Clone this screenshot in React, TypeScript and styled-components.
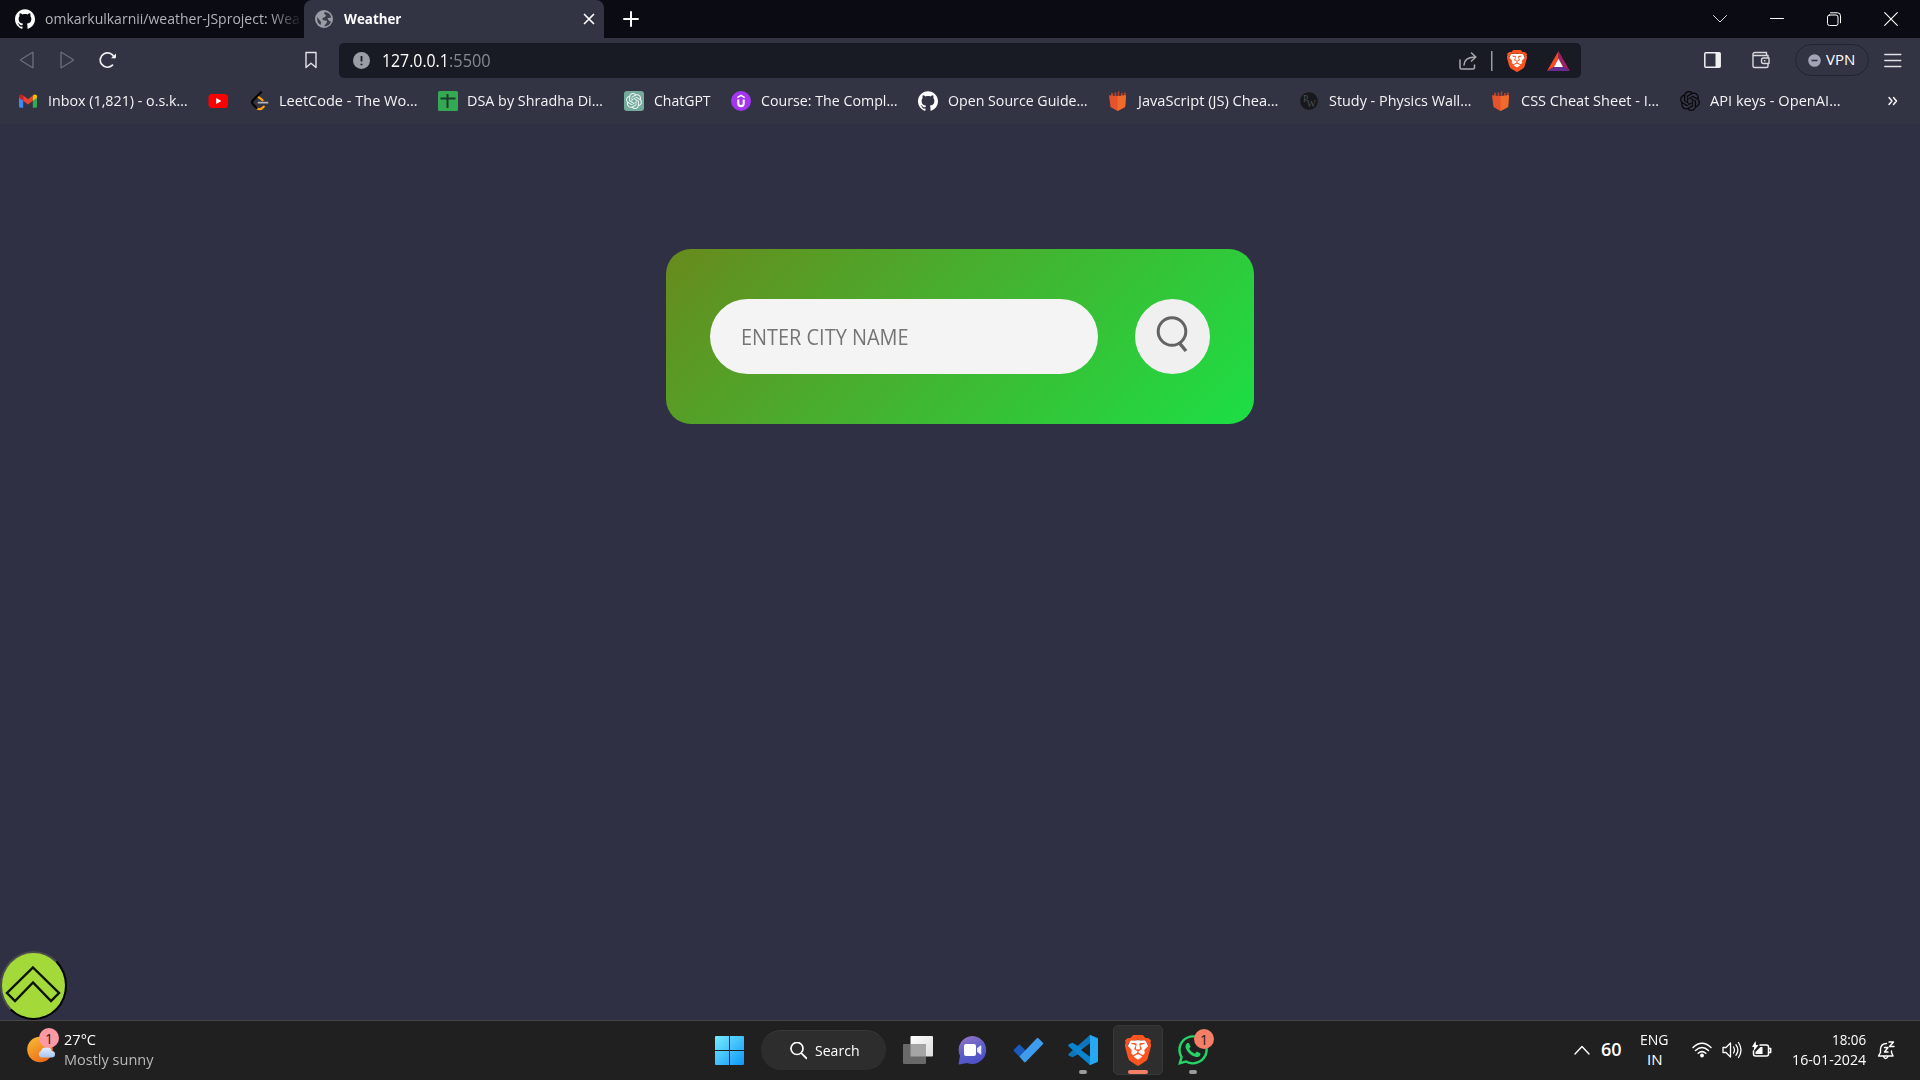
import React, { useLayoutEffect, useRef, useState } from "react";
import styled, { createGlobalStyle } from "styled-components";
import { SiBrave, SiGithub, SiOpenai } from "react-icons/si";
import { FaWhatsapp } from "react-icons/fa";

const GlobalStyle = createGlobalStyle`
  * { box-sizing: border-box; }
  body {
    margin: 0;
    overflow: hidden;
    background: #2f3044;
    font-family: "Open Sans", "Noto Sans", sans-serif;
  }
  svg { display: block; flex: none; }
`;

/* ---------- text set to a known width ---------- */

const Measure = styled.span`
  display: flex;
  flex: none;
  height: 20px;
`;

const Line = styled.span<{ $size: number; $color: string; $weight: number }>`
  flex: none;
  white-space: pre;
  transform-origin: 0 50%;
  font-size: ${(p) => p.$size}px;
  line-height: 18px;
  font-weight: ${(p) => p.$weight};
  color: ${(p) => p.$color};
`;

type LabelProps = { children: string; width: number; size?: number; color?: string; weight?: number };

function Label({ children, width, size = 15, color = "#f3f3f5", weight = 400 }: LabelProps) {
  const ref = useRef<HTMLSpanElement>(null);
  const [scale, setScale] = useState(1);
  useLayoutEffect(() => {
    if (ref.current) setScale(width / ref.current.offsetWidth);
  }, [children, width]);
  return (
    <Measure style={{ width }}>
      <Line ref={ref} $size={size} $color={color} $weight={weight} style={{ transform: `scaleX(${scale})` }}>
        {children}
      </Line>
    </Measure>
  );
}

/* ---------- layout ---------- */

const Screen = styled.div`
  width: 1920px;
  height: 1080px;
  display: flex;
  flex-direction: column;
  overflow: hidden;
`;

const TabStrip = styled.div`
  height: 38px;
  display: flex;
  background: #0b0b14;
`;

const Tab = styled.div<{ $active?: boolean }>`
  width: ${(p) => (p.$active ? 300 : 304)}px;
  display: flex;
  align-items: center;
  padding-left: ${(p) => (p.$active ? 11 : 15)}px;
  gap: ${(p) => (p.$active ? 11 : 10)}px;
  background: ${(p) => (p.$active ? "#323443" : "transparent")};
  border-radius: ${(p) => (p.$active ? "8px 8px 0 0" : "0")};
`;

const FadedTitle = styled.div`
  width: 256px;
  mask-image: linear-gradient(90deg, #000 225px, rgba(0, 0, 0, 0.1) 254px);
`;

const Slot = styled.div<{ $ml?: number; $w: number }>`
  width: ${(p) => p.$w}px;
  margin-left: ${(p) => p.$ml ?? 0}px;
  display: flex;
  align-items: center;
  flex: none;
`;

const WindowButtons = styled.div`
  margin-left: auto;
  padding-right: 22px;
  display: flex;
  align-items: center;
  gap: 43px;
`;

const NavRow = styled.div`
  height: 45px;
  padding-bottom: 1px;
  display: flex;
  align-items: center;
  background: #323443;
`;

const AddressBar = styled.div`
  width: 1242px;
  height: 35px;
  margin: 1px 0 0 22px;
  display: flex;
  align-items: center;
  padding-left: 14px;
  border-radius: 5px;
  background: #181b23;
`;

const Vpn = styled.div`
  width: 74px;
  height: 32px;
  margin-left: 25px;
  display: flex;
  align-items: center;
  gap: 5px;
  padding-left: 12px;
  border: 1px solid #232531;
  border-radius: 16px;
`;

const Bookmarks = styled.div`
  height: 41px;
  padding: 0 0 5px 18px;
  display: flex;
  align-items: center;
  gap: 20.75px;
  background: #323443;
`;

const Bookmark = styled.div`
  display: flex;
  align-items: center;
  gap: 9.5px;
`;

const More = styled.div`
  margin-left: 27px;
`;

const Page = styled.main`
  flex: 1;
  display: flex;
  flex-direction: column;
  justify-content: space-between;
  align-items: center;
  background: #2f3044;
`;

const Card = styled.section`
  width: 588px;
  height: 175px;
  margin-top: 125px;
  padding: 0 44px;
  display: flex;
  align-items: center;
  justify-content: space-between;
  border-radius: 25px;
  background: linear-gradient(135deg, #688a1d, #1cdf45);
`;

const CityField = styled.div`
  width: 388px;
  height: 75px;
  padding: 0 0 0 31px;
  display: flex;
  align-items: center;
  border-radius: 38px;
  background: #f4f4f4;
`;

const SearchButton = styled.button`
  width: 75px;
  height: 75px;
  padding: 0 2px 5px 0;
  display: flex;
  align-items: center;
  justify-content: center;
  border: 0;
  border-radius: 50%;
  background: #f0f0f0;
`;

const ToTop = styled.button`
  width: 67px;
  height: 69px;
  align-self: flex-start;
  padding: 0 1px 3px 0;
  display: flex;
  align-items: center;
  justify-content: center;
  border: 2px solid;
  border-color: #4c4c4c #000 #000 #4c4c4c;
  border-radius: 50%;
  background: #a4d93a;
`;

const Taskbar = styled.footer`
  height: 60px;
  padding-bottom: 1px;
  display: flex;
  align-items: center;
  border-top: 1px solid #454545;
  background: #202020;
`;

const WeatherIcon = styled.div`
  position: relative;
  width: 32px;
  height: 36px;
  margin: 0 5px 8px 27px;
`;

const Badge = styled.span<{ $bg: string; $left: number; $top: number }>`
  position: absolute;
  left: ${(p) => p.$left}px;
  top: ${(p) => p.$top}px;
  width: 20px;
  height: 20px;
  border-radius: 50%;
  display: flex;
  align-items: center;
  justify-content: center;
  font-size: 14px;
  color: #1c1c1c;
  background: ${(p) => p.$bg};
`;

const Stack = styled.div<{ $align?: string }>`
  padding-bottom: 1px;
  display: flex;
  flex-direction: column;
  align-items: ${(p) => p.$align ?? "flex-start"};
`;

const SearchPill = styled.div`
  width: 125px;
  height: 40px;
  margin: 0 11px 0 17px;
  padding-left: 28px;
  display: flex;
  align-items: center;
  gap: 7.5px;
  border-radius: 20px;
  border-top: 1px solid #393939;
  background: #2d2d2d;
`;

const AppTile = styled.div<{ $active?: boolean }>`
  position: relative;
  width: 50px;
  height: 50px;
  margin-right: 5px;
  display: flex;
  align-items: center;
  justify-content: center;
  border-radius: 5px;
  border: 1px solid ${(p) => (p.$active ? "#383838" : "transparent")};
  background: ${(p) => (p.$active ? "#2e2e2e" : "transparent")};
`;

const Running = styled.i<{ $active?: boolean }>`
  position: absolute;
  bottom: 0;
  left: ${(p) => (p.$active ? 14 : 20)}px;
  width: ${(p) => (p.$active ? 20 : 8)}px;
  height: 4px;
  border-radius: 2px;
  background: ${(p) => (p.$active ? "#f37f66" : "#9b9b9b")};
`;

/* ---------- icons ---------- */

const stroke = (color: string, width = 1.4) => ({
  fill: "none",
  stroke: color,
  strokeWidth: width,
  strokeLinecap: "round" as const,
  strokeLinejoin: "round" as const,
});

const BraveLion = ({ w, h }: { w: number; h: number }) => (
  <svg width={w} height={h} viewBox="2 0 20 24" preserveAspectRatio="none">
    <path d="M6 4h12l2 5-3 9-5 4-5-4-3-9z" fill="#fff" />
    <SiBrave x="0" y="0" size={24} color="#fb5420" />
  </svg>
);

const Gmail = () => (
  <svg width="20" height="20" viewBox="0 0 20 20">
    <path d="M1 5.5v9.8q0 1.4 1.4 1.4h2.8V8.5z" fill="#4285f4" />
    <path d="M19 5.5v9.8q0 1.4-1.4 1.4h-2.8V8.5z" fill="#34a853" />
    <path d="M5.2 4.6v5.2L10 13.4l4.8-3.6V4.6L10 8.2z" fill="#ea4335" />
    <path d="M1 5.4v1.4l4.2 3V4.6L4.4 4C3 3 1 3.8 1 5.4z" fill="#c5221f" />
    <path d="M19 5.4v1.4l-4.2 3V4.6l.8-.6C17 3 19 3.8 19 5.4z" fill="#fbbc04" />
  </svg>
);

const YouTube = () => (
  <svg width="20" height="20" viewBox="0 0 20 20">
    <rect x=".5" y="3" width="19.5" height="14" rx="3.5" fill="#f00" />
    <path d="M8.2 7l5.2 3-5.2 3z" fill="#fff" />
  </svg>
);

const LeetCode = () => (
  <svg width="20" height="20" viewBox="0 0 20 20" fill="none" strokeWidth="2.2" strokeLinecap="round">
    <path d="M9.5 6.2L13.5 9.2M8.4 17.6q3.4 1.8 6.4-2" stroke="#ffa116" />
    <path d="M12 1.2L3.8 9.4q-1.6 1.8 0 3.6l3.8 4" stroke="#050505" />
    <path d="M9.5 11.7h9" stroke="#b3b3b3" strokeWidth="1.8" />
  </svg>
);

const Sheet = () => (
  <svg width="20" height="20" viewBox="0 0 20 20">
    <rect width="20" height="20" rx="1.5" fill="#34a853" />
    <path d="M9.5 3v14M2.5 7.5h15" stroke="#1d3b2a" strokeWidth="2" />
  </svg>
);

const ChatGpt = () => (
  <svg width="20" height="20" viewBox="0 0 20 20">
    <rect width="20" height="20" rx="3" fill="#74aa9c" />
    <SiOpenai x="2" y="2" size={16} color="#e9f3f0" />
  </svg>
);

const Udemy = () => (
  <svg width="20" height="20" viewBox="0 0 20 20">
    <circle cx="10" cy="10" r="10" fill="#a435f0" />
    <path d="M7.3 8.5v4q0 2.6 2.7 2.6t2.7-2.6v-4" fill="none" stroke="#fff" strokeWidth="2.1" />
    <path d="M6.3 6.6L10 4.4l3.7 2.2" fill="none" stroke="#fff" strokeWidth="1.6" />
  </svg>
);

const Fries = () => (
  <svg width="20" height="20" viewBox="0 0 20 20">
    <path d="M3 1.8l2 .2v3H3zM6.5 1.5h1.8V5H6.5zM10 .2l1.5.3L11 5H9.5zM13 2h1.8v3H13zM16 1.5l2 .2-.6 4h-1.8z" fill="#b5402a" />
    <path d="M1 4.2q8.5 1.6 17 0L17.1 16 9.5 20l-7-4z" fill="#e5532d" />
    <path d="M9.5 5q4.5 0 8.5-.8L17.1 16 9.5 20z" fill="#f06a2b" />
  </svg>
);

const PhysicsWallah = () => (
  <svg width="20" height="20" viewBox="0 0 20 20">
    <circle cx="10" cy="10" r="9.3" fill="#17181b" stroke="#3a3b44" strokeWidth=".7" />
    <text x="4" y="11" fontSize="9.5" fontFamily="Liberation Serif" fill="#4c4d54">P</text>
    <text x="7.5" y="16" fontSize="10" fontFamily="Liberation Serif" fill="#4c4d54">W</text>
  </svg>
);

const Globe = () => (
  <svg width="18" height="18" viewBox="0 0 18 18">
    <circle cx="9" cy="9" r="9" fill="#9a9ca6" />
    <path d="M9.5 2q-1 2 .8 2.8T9 7.6q-2 .2-1.6 1.6T10.5 10.5q2.500.5 1 2.5T9 16.3q5 .2 7-4.6l-2.5-1.5-1-2 3.8-.7Q15 2.4 9.5 2zM2.3 7q-1 5 3.2 8l.7-2.8L4.5 10z" fill="#3b3d4b" />
  </svg>
);

const VsCode = () => (
  <svg width="30" height="30" viewBox="0 0 30 30">
    <path d="M22 0l8 3v6L4.5 22.2 1 20.8q-1.5-1 0-2.2z" fill="#0f74b8" />
    <path d="M1 9.3l3.5-1.6L30 23v4l-8 3L1 11.7q-1.5-1.2 0-2.4z" fill="#0a84cf" />
    <path d="M22 0l6.8 2.9Q30 3.5 30 5v20q0 1.5-1.2 2.1L22 30q-1.2-.6 0-2V2q-1.2-1.4 0-2z" fill="#27a8f2" />
    <path d="M22 8.3v13.4L13 15z" fill="#202020" />
  </svg>
);

const bookmarks = [
  { icon: <Gmail />, text: "Inbox (1,821) - o.s.k…", width: 140 },
  { icon: <YouTube />, text: "", width: 0 },
  { icon: <LeetCode />, text: "LeetCode - The Wo…", width: 138.5 },
  { icon: <Sheet />, text: "DSA by Shradha Di…", width: 136 },
  { icon: <ChatGpt />, text: "ChatGPT", width: 57 },
  { icon: <Udemy />, text: "Course: The Compl…", width: 136.5 },
  { icon: <SiGithub size={20} color="#fff" />, text: "Open Source Guide…", width: 140 },
  { icon: <Fries />, text: "JavaScript (JS) Chea…", width: 140.5 },
  { icon: <PhysicsWallah />, text: "Study - Physics Wall…", width: 142 },
  { icon: <Fries />, text: "CSS Cheat Sheet - I…", width: 138.5 },
  { icon: <SiOpenai size={20} color="#08080a" />, text: "API keys - OpenAI…", width: 130.5 },
];

/* ---------- sections ---------- */

function BrowserChrome() {
  return (
    <header>
      <TabStrip>
        <Tab>
          <SiGithub size={20} color="#fff" />
          <FadedTitle>
            <Label width={255} color="#b2b2b8">omkarkulkarnii/weather-JSproject: Wea</Label>
          </FadedTitle>
        </Tab>
        <Tab $active>
          <Globe />
          <Label width={57} weight={700} color="#fff">Weather</Label>
          <Slot $ml={171} $w={12}>
            <svg width="12" height="12" viewBox="0 0 12 12"><path d="M1.5 1.5l9 9M10.5 1.5l-9 9" {...stroke("#fff", 1.7)} /></svg>
          </Slot>
        </Tab>
        <Slot $ml={19} $w={16}>
          <svg width="16" height="16" viewBox="0 0 16 16"><path d="M8 1v14M1 8h14" {...stroke("#fff", 2)} /></svg>
        </Slot>
        <WindowButtons>
          <svg width="14" height="14" viewBox="0 0 14 14"><path d="M.5 3.5L7 10 13.5 3.5" {...stroke("#ddd", 1)} /></svg>
          <svg width="14" height="14" viewBox="0 0 14 14"><path d="M.5 6.5h13" {...stroke("#fff", 1)} /></svg>
          <svg width="14" height="14" viewBox="0 0 14 14">
            <rect x=".5" y="3" width="10.5" height="10.5" rx="2" {...stroke("#fff", 1)} />
            <path d="M3.5 .8h7q3 0 3 3v7" {...stroke("#fff", 1)} />
          </svg>
          <svg width="14" height="14" viewBox="0 0 14 14"><path d="M.7 .7l12.6 12.6M13.3 .7L.7 13.3" {...stroke("#fff", 1.1)} /></svg>
        </WindowButtons>
      </TabStrip>

      <NavRow>
        <Slot $ml={20} $w={14}>
          <svg width="14" height="18" viewBox="0 0 14 18"><path d="M13 1.8v14.4q0 .8-.8.3L1 9.5q-.6-.5 0-1L12.2 1.5q.8-.5.8.3z" {...stroke("#6a6c79")} /></svg>
        </Slot>
        <Slot $ml={26} $w={14}>
          <svg width="14" height="18" viewBox="0 0 14 18"><path d="M1 1.8v14.4q0 .8.8.3L13 9.5q.6-.5 0-1L1.8 1.5Q1 1 1 1.8z" {...stroke("#6a6c79")} /></svg>
        </Slot>
        <Slot $ml={25} $w={18}>
          <svg width="18" height="18" viewBox="0 0 18 18">
            <path d="M13.5 14.2A7.2 7.2 0 1 1 15.2 6.5" {...stroke("#f0f0f2", 1.7)} />
            <path d="M12 7.2h4.2q.8 0 .8-.8V2.5z" fill="#f0f0f2" />
          </svg>
        </Slot>
        <Slot $ml={188} $w={12}>
          <svg width="12" height="18" viewBox="0 0 12 18"><path d="M1 1.5h10v15l-5-4.3-5 4.3z" {...stroke("#e4e4e8")} /></svg>
        </Slot>
        <AddressBar>
          <svg width="17" height="17" viewBox="0 0 17 17">
            <circle cx="8.5" cy="8.5" r="8.5" fill="#9a9ca6" />
            <path d="M8.5 4v5.5M8.5 11.7v1.5" stroke="#181b23" strokeWidth="1.8" />
          </svg>
          <Slot $ml={12} $w={109}>
            <Label width={67} size={17.5} color="#fff">127.0.0.1</Label>
            <Label width={42} size={17.5} color="#868890">:5500</Label>
          </Slot>
          <Slot $ml={968} $w={18}>
            <svg width="18" height="18" viewBox="0 0 18 18"><path d="M1 8v7.5q0 1.5 1.5 1.5H14q1.5 0 1.5-1.5V13M5 13q.2-7.5 10.5-8M12.5 1l4.3 4-4.3 4" {...stroke("#a9a9ae", 1.5)} /></svg>
          </Slot>
          <Slot $ml={14} $w={2}>
            <svg width="2" height="20"><rect width="1.5" height="20" fill="#9a9ca0" /></svg>
          </Slot>
          <Slot $ml={14} $w={20}><BraveLion w={20} h={22} /></Slot>
          <Slot $ml={20} $w={23}>
            <svg width="23" height="20" viewBox="0 0 23 20">
              <path d="M11.5 0L0 20l7-4 4.5-8.5z" fill="#ff4724" />
              <path d="M11.5 0L23 20l-7-4-4.5-8.5z" fill="#9e1f63" />
              <path d="M0 20h23l-7-4H7z" fill="#662d91" />
              <path d="M11.5 7.5L16 16H7z" fill="#fff" />
            </svg>
          </Slot>
        </AddressBar>
        <Slot $ml={123} $w={17}>
          <svg width="17" height="16" viewBox="0 0 17 16">
            <rect x=".8" y=".8" width="15.4" height="14.4" rx="1" {...stroke("#f0f0f2", 1.5)} />
            <rect x="11.5" y="1" width="4.5" height="14" fill="#f0f0f2" />
          </svg>
        </Slot>
        <Slot $ml={31} $w={18}>
          <svg width="18" height="18" viewBox="0 0 18 18"><path d="M16 6V4.5M16 13.5V15q0 1.5-1.5 1.5h-12Q1 16.5 1 15V3.5Q1 1.5 3 1.5h11.5V4.5M1.5 4.5H16V6M17 7h-5.5Q9.5 7 9.5 9v1.5q0 2 2 2H17zM12.5 9.8h.5" {...stroke("#d8d8dd", 1.4)} /></svg>
        </Slot>
        <Vpn>
          <svg width="13" height="13" viewBox="0 0 13 13">
            <circle cx="6.5" cy="6.5" r="6.3" fill="#a3a4b8" />
            <path d="M3.5 6.5h6" stroke="#323443" strokeWidth="1.6" />
          </svg>
          <Label width={29} color="#fff">VPN</Label>
        </Vpn>
        <Slot $ml={15} $w={18}>
          <svg width="18" height="15" viewBox="0 0 18 15"><path d="M.8 1.5h16M.8 7.5h16M.8 13.5h16" {...stroke("#e0e0e4", 1.4)} /></svg>
        </Slot>
      </NavRow>

      <Bookmarks>
        {bookmarks.map((b, i) => (
          <Bookmark key={i}>
            {b.icon}
            {b.text && <Label width={b.width}>{b.text}</Label>}
          </Bookmark>
        ))}
        <More>
          <svg width="10" height="10" viewBox="0 0 10 10"><path d="M1 1.5L4 5 1 8.5M5.5 1.5L8.5 5l-3 3.5" {...stroke("#fff", 1.4)} /></svg>
        </More>
      </Bookmarks>
    </header>
  );
}

function WeatherPage() {
  return (
    <Page>
      <Card>
        <CityField>
          <Label width={167.5} size={22} color="#757575">ENTER CITY NAME</Label>
        </CityField>
        <SearchButton aria-label="Search">
          <svg width="32" height="38" viewBox="0 0 32 38" fill="none" stroke="#636363">
            <circle cx="16" cy="16.5" r="13.8" strokeWidth="3" />
            <path d="M23 27.5l7 8.5" strokeWidth="3.5" />
          </svg>
        </SearchButton>
      </Card>
      <ToTop aria-label="Back to top">
        <svg width="56" height="38" viewBox="0 0 56 38">
          <path d="M28 2.5L54 28l-8 8L28 17.5 10 36l-8-8z" fill="none" stroke="#0c1400" strokeWidth="2.4" />
        </svg>
      </ToTop>
    </Page>
  );
}

function WindowsTaskbar() {
  return (
    <Taskbar>
      <Slot $w={715}>
        <WeatherIcon>
          <svg width="32" height="36" viewBox="0 0 32 36">
            <defs>
              <linearGradient id="sun" x1="0" y1="0" x2=".6" y2="1">
                <stop offset="0" stopColor="#f7c035" />
                <stop offset="1" stopColor="#ef6c17" />
              </linearGradient>
              <linearGradient id="cloud" x1="0" y1="0" x2="0" y2="1">
                <stop offset="0" stopColor="#e6efff" />
                <stop offset="1" stopColor="#a5c3f3" />
              </linearGradient>
            </defs>
            <circle cx="13" cy="21.5" r="12.8" fill="url(#sun)" />
            <path d="M14 29.5a3.5 3.5 0 0 1 0-6.5q1-4 5-3.5 5-1 5.5 3.5 3.5 0 3.5 3.2t-3.5 3.3z" fill="url(#cloud)" />
          </svg>
          <Badge $bg="#fd99a4" $left={12} $top={0}>1</Badge>
        </WeatherIcon>
        <Stack>
          <Label width={32} color="#fff">27°C</Label>
          <Label width={89} color="#b9b9b9">Mostly sunny</Label>
        </Stack>
      </Slot>

      <svg width="29" height="29" viewBox="0 0 29 29">
        <defs>
          <linearGradient id="win" x1="0" y1="0" x2="1" y2="1">
            <stop offset="0" stopColor="#76ecff" />
            <stop offset="1" stopColor="#0e96f8" />
          </linearGradient>
        </defs>
        <path d="M1 0h13v14H0V1Q0 0 1 0zM15 0H28q1 0 1 1v13H15zM0 15h14V29H1q-1 0-1-1zM15 15H29V28q0 1-1 1H15z" fill="url(#win)" />
      </svg>
      <SearchPill>
        <svg width="18" height="18" viewBox="0 0 18 18"><path d="M12.5 11.3l5 5M14 6.5A6 6 0 1 1 2 6.5a6 6 0 0 1 12 0z" {...stroke("#fff", 1.7)} /></svg>
        <Label width={45} color="#fff">Search</Label>
      </SearchPill>
      <Slot $ml={-4} $w={335}>
        <AppTile>
          <svg width="30" height="28" viewBox="0 0 30 28">
            <defs>
              <linearGradient id="tv" x1="0" y1="0" x2="1" y2="1">
                <stop offset="0" stopColor="#fff" />
                <stop offset="1" stopColor="#dcdcdc" />
              </linearGradient>
            </defs>
            <rect x="7.5" width="22.5" height="20.5" rx="1" fill="url(#tv)" />
            <rect y="8" width="23" height="20" rx="1" fill="#696969" />
            <path d="M7.5 8H23v12.5H7.5z" fill="#a5a5a5" />
          </svg>
        </AppTile>
        <AppTile>
          <svg width="30" height="29" viewBox="0 0 30 29">
            <defs>
              <linearGradient id="chat" x1="0" y1="0" x2=".4" y2="1">
                <stop offset="0" stopColor="#9c75c4" />
                <stop offset=".6" stopColor="#5b5fc7" />
                <stop offset="1" stopColor="#4f52c8" />
              </linearGradient>
            </defs>
            <path d="M14.5 0a14 14 0 1 1-5.5 27L1.5 28.5Q.3 28.5.7 27.3L2 20A14 14 0 0 1 14.5 0z" fill="url(#chat)" />
            <rect x="6" y="8" width="12" height="12" rx="2" fill="#fff" />
            <path d="M19 12.3L22.5 9.5q.8-.4.8.5v8q0 .9-.8.5L19 15.8z" fill="#eceaff" />
          </svg>
        </AppTile>
        <AppTile>
          <svg width="31" height="26" viewBox="0 0 31 26">
            <path d="M1 12.5L5.5 8q.8-.8 1.6 0l8.5 8.5-4.6 8L1 14.2q-.8-.8 0-1.7z" fill="#195abd" />
            <path d="M6.5 19.5L23.8 1.2q.8-.8 1.6 0l4.5 4.5q.8.8 0 1.6L12.7 25q-.8.8-1.6 0z" fill="#3f9cec" />
          </svg>
        </AppTile>
        <AppTile><VsCode /><Running /></AppTile>
        <AppTile $active><BraveLion w={26} h={31} /><Running $active /></AppTile>
        <AppTile>
          <FaWhatsapp size={34} color="#25d366" />
          <Badge $bg="#f37f66" $left={25} $top={3}>1</Badge>
          <Running />
        </AppTile>
      </Slot>

      <Slot $ml={346} $w={16}>
        <svg width="16" height="10" viewBox="0 0 16 10"><path d="M1 9l7-7.5L15 9" {...stroke("#fff", 1.4)} /></svg>
      </Slot>
      <Slot $ml={11} $w={21}><Label width={21} size={18} weight={600} color="#fff">60</Label></Slot>
      <Slot $ml={18} $w={30}>
        <Stack $align="center">
          <Label width={29} color="#fff">ENG</Label>
          <Label width={15} color="#fff">IN</Label>
        </Stack>
      </Slot>
      <Slot $ml={22} $w={20}>
        <svg width="20" height="16" viewBox="0 0 20 16">
          <path d="M1 5.5q9-8.5 18 0M3.5 8.5q6.5-6 13 0M6.2 11.3q3.8-3.3 7.6 0" {...stroke("#fff", 1.5)} />
          <circle cx="10" cy="13.5" r="1.9" fill="#fff" />
        </svg>
      </Slot>
      <Slot $ml={10} $w={20}>
        <svg width="20" height="18" viewBox="0 0 20 18"><path d="M1 6.5h3L8.5 2v14L4 11.5H1zM11.5 6q2 3 0 6M14 3.8q3.8 5.2 0 10.4M16.5 1.5q5 7.5 0 15" {...stroke("#fff", 1.3)} /></svg>
      </Slot>
      <Slot $ml={9} $w={21}>
        <svg width="21" height="18" viewBox="0 0 21 18">
          <path d="M9 4h6.5q2 0 2 2v7q0 2-2 2H4.5q-2 0-2-2V10M18.5 7.5h1.2v4h-1.2" {...stroke("#fff", 1.5)} />
          <path d="M9.5 6h2v7H4.5V11z" fill="#fff" />
          <path d="M4.5 0L1 6h2.2L2.5 10.5 7.5 4H5z" fill="#fff" />
        </svg>
      </Slot>
      <Slot $ml={20} $w={74}>
        <Stack $align="flex-end">
          <Label width={34} color="#fff">18:06</Label>
          <Label width={74} color="#fff">16-01-2024</Label>
        </Stack>
      </Slot>
      <Slot $ml={11} $w={18}>
        <svg width="18" height="19" viewBox="0 0 18 19">
          <path d="M9.5 2.5Q4 2.5 3.5 8v3.5L1.5 15H16l-1.5-3.5V10M6.5 15.5q2 4 4.5 0M12 1h4.5L12.5 5.5H17M7.5 6.5h3.5L7.5 11H11" {...stroke("#fff", 1.4)} />
        </svg>
      </Slot>
    </Taskbar>
  );
}

export default function App() {
  return (
    <Screen>
      <GlobalStyle />
      <BrowserChrome />
      <WeatherPage />
      <WindowsTaskbar />
    </Screen>
  );
}
